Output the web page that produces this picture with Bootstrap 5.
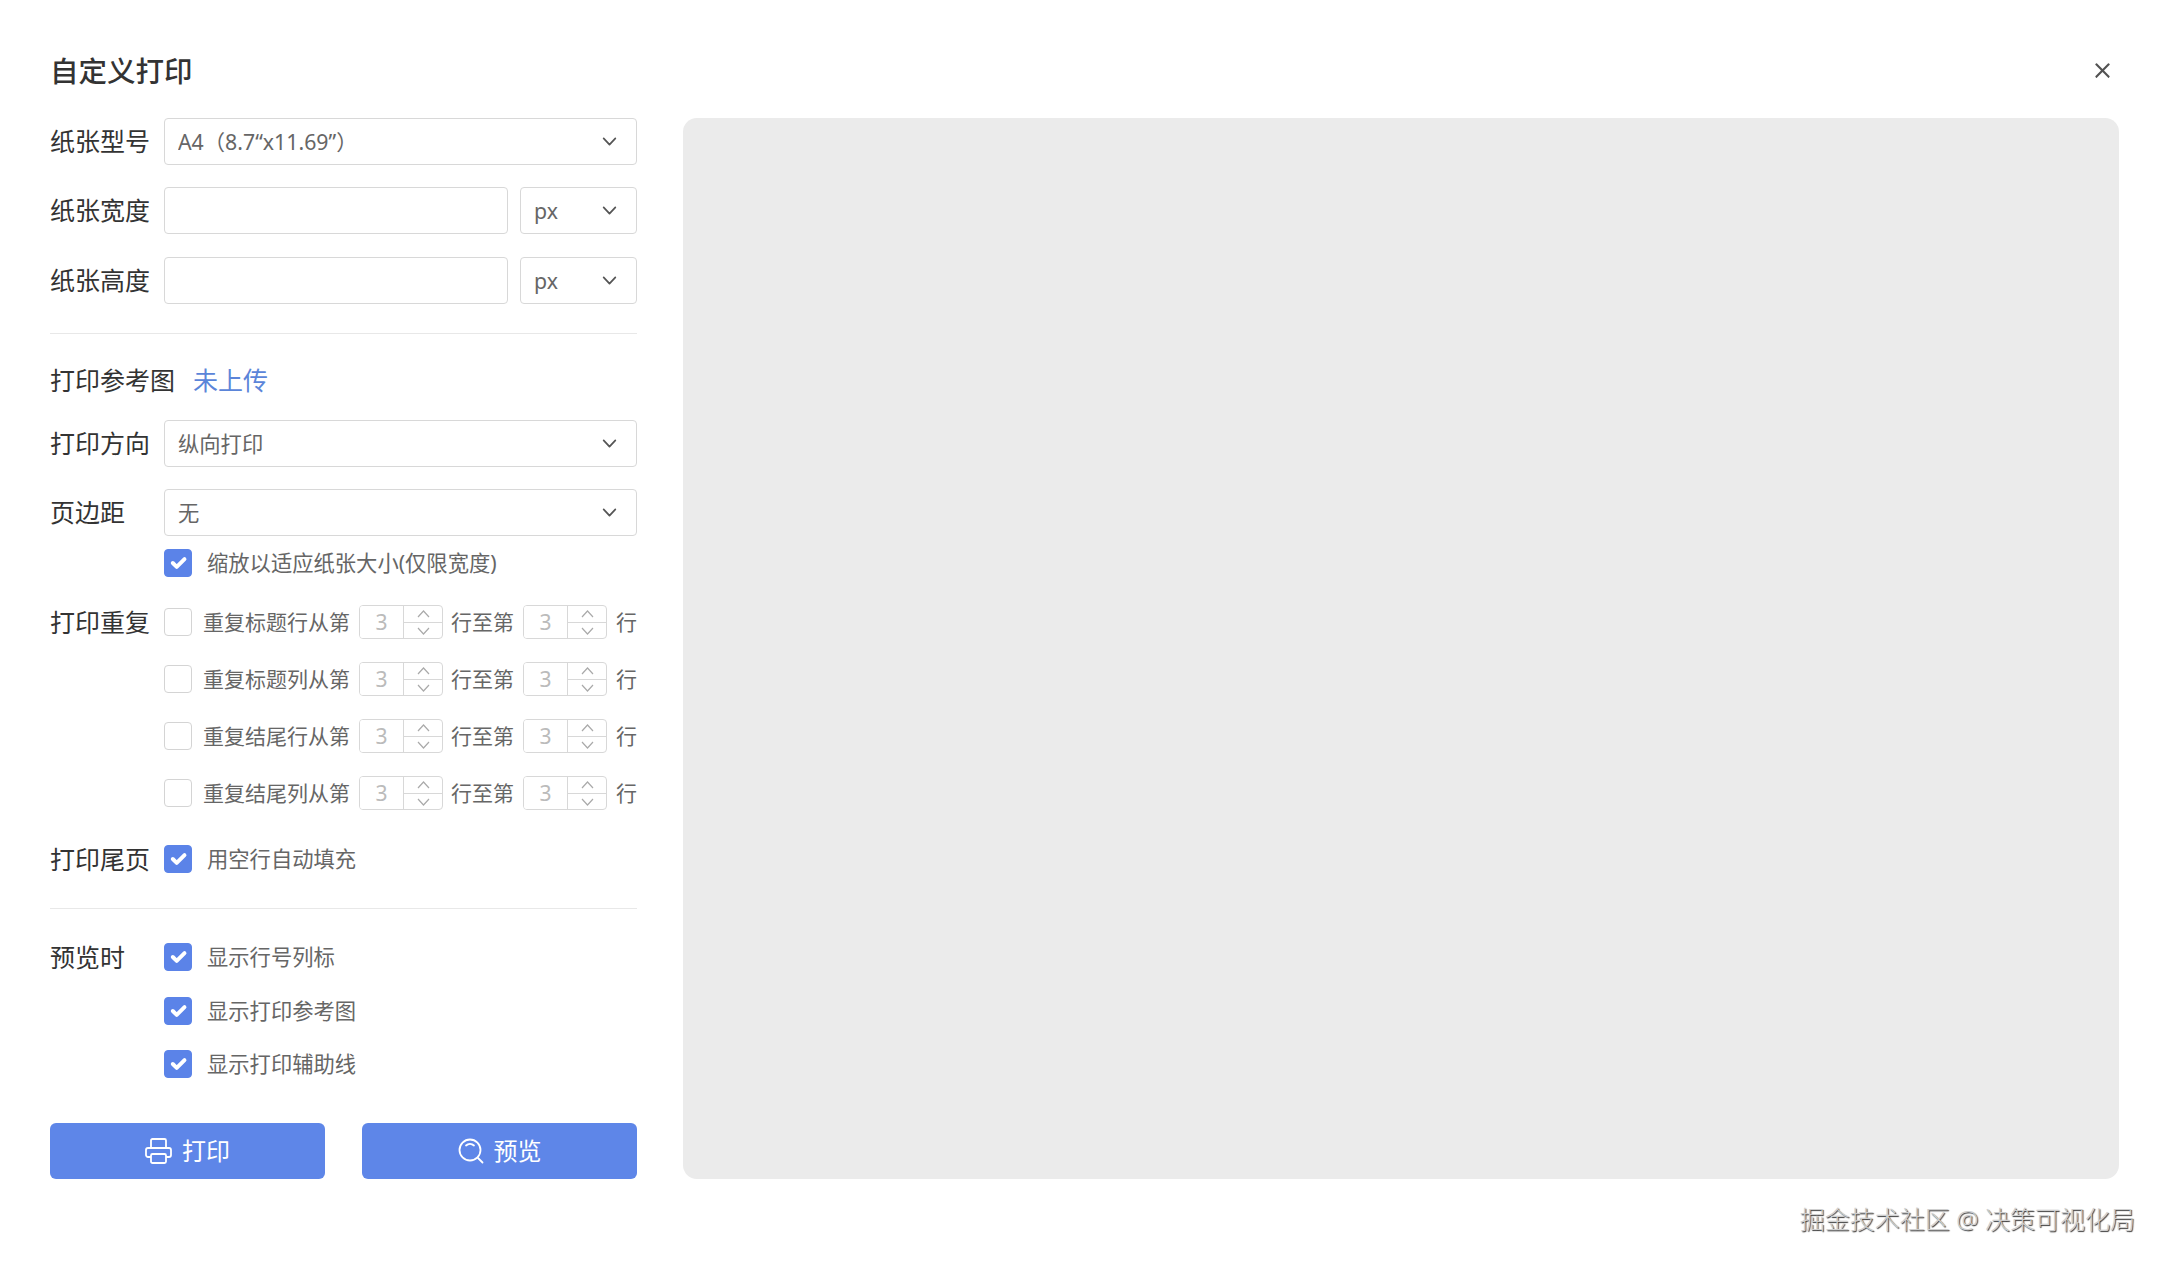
<!DOCTYPE html>
<html lang="zh-CN">
<head>
<meta charset="utf-8">
<title>自定义打印</title>
<link rel="stylesheet" href="https://cdn.jsdelivr.net/npm/bootstrap@5.3.0/dist/css/bootstrap.min.css">
<style>
html,body{height:100%}
body{background:#fff;overflow:hidden;font-family:"Noto Sans","Noto Sans CJK SC",sans-serif;color:#333}
.pg-head{height:118px;padding:0 56px 33px 50px}
.pg-title{font-size:28.500px;font-weight:500;line-height:1;margin:0;color:#333}
.btn-close.x-btn{width:17px;height:17px;padding:0;background-size:17px;opacity:.68;box-sizing:border-box;margin-bottom:6px}
.pg-main{padding:0 48px 0 50px;gap:46px}
.side{width:587px;flex:none}
.panel{flex:1;height:1061px;background:#ebebeb;border-radius:14px}
.line-47{height:47px}
.line-28{height:28px}
.line-34{height:34px}
.lbl{width:114px;flex:none;font-size:25px;line-height:1;color:#333;white-space:nowrap}
.form-select.f-sel,.form-control.f-in{height:47px;font-size:21.300px;color:#666;border:1.5px solid #d8d8d8;border-radius:4px;padding:0 40px 0 13px;box-shadow:none;font-family:inherit;background-color:#fff}
.form-select.f-sel{background-image:url("data:image/svg+xml,%3csvg xmlns='http://www.w3.org/2000/svg' viewBox='0 0 16 16'%3e%3cpath fill='none' stroke='%23555' stroke-linecap='round' stroke-linejoin='round' stroke-width='1.6' d='M2.5 5l5.5 6 5.5-6'/%3e%3c/svg%3e");background-position:right 18px center;background-size:17px 17px}
.w-in{width:344px;flex:none}
.w-un{width:117px;flex:none;margin-left:12px}
.form-check-input.f-chk{width:28px;height:28px;margin:0;flex:none;border:1.5px solid #d4d4d4;border-radius:4px;box-shadow:none;float:none}
.form-check-input.f-chk:checked{background-color:#5b83e8;border-color:#5b83e8}
.chk-txt{font-size:21.300px;line-height:1;color:#666;margin-left:15px}
.chk-txt.tight{margin-left:11px;width:147px;flex:none;white-space:nowrap;font-size:21px}
.ref-txt{font-size:25px;line-height:1;color:#333}
.ref-link{font-size:25px;line-height:1;color:#5b85d9;text-decoration:none;margin-left:18px}
.rep-lead{width:114px;flex:none}
.rep-cell{width:84px;height:34px;border:1.5px solid #d8d8d8;border-radius:4px;flex:none;overflow:hidden;margin-left:9px}
.rep-cell input{width:44px;height:100%;border:0;border-right:1.5px solid #d8d8d8;padding:0;text-align:center;color:#bbb;font-size:21px;background:#fff;font-family:inherit;outline:0}
.rep-arrows{flex:1}
.rep-arrows span{height:50%;display:flex;align-items:center;justify-content:center}
.rep-arrows span+span{border-top:1.5px solid #d8d8d8}
.rep-mid{font-size:21px;line-height:1;color:#666;margin-left:8px;width:63px;flex:none;white-space:nowrap}
.rep-end{font-size:21px;line-height:1;color:#666;margin-left:9px;white-space:nowrap}
.rule{margin:0;border:0;border-top:1px solid #e8e8e8;opacity:1}
.btn.go-btn{width:275px;height:56px;background:#5e86e8;border:0;border-radius:6px;color:#fff;font-size:24px;line-height:1;padding:0;gap:10px}
.mt13{margin-top:13px}.mt20{margin-top:20px}.mt22{margin-top:22px}.mt23{margin-top:23px}.mt25{margin-top:25px}.mt26{margin-top:26px}.mt28{margin-top:28px}.mt29{margin-top:29px}.mt34{margin-top:34px}.mt35{margin-top:35px}.mt45{margin-top:45px}
.mark-txt{padding:25px 32px 0 0;font-size:25px;font-weight:300;line-height:30px;color:#cfcfcf;text-shadow:1px 1px 1px #333,-1px -1px 0 #fff;white-space:nowrap}
</style>
</head>
<body>
<header class="pg-head d-flex justify-content-between align-items-end">
  <h1 class="pg-title">自定义打印</h1>
  <button type="button" class="btn-close x-btn" aria-label="关闭"></button>
</header>
<main class="pg-main d-flex align-items-start">
  <form class="side">
    <div class="d-flex align-items-center line-47"><span class="lbl">纸张型号</span>
      <select class="form-select f-sel"><option>A4（8.7“x11.69”）</option></select></div>
    <div class="d-flex align-items-center line-47 mt22"><span class="lbl">纸张宽度</span>
      <input class="form-control f-in w-in" type="text">
      <select class="form-select f-sel w-un"><option>px</option></select></div>
    <div class="d-flex align-items-center line-47 mt23"><span class="lbl">纸张高度</span>
      <input class="form-control f-in w-in" type="text">
      <select class="form-select f-sel w-un"><option>px</option></select></div>
    <hr class="rule mt29">
    <div class="d-flex align-items-center mt26" style="height:40px"><span class="ref-txt">打印参考图</span><a class="ref-link" href="#">未上传</a></div>
    <div class="d-flex align-items-center line-47 mt20"><span class="lbl">打印方向</span>
      <select class="form-select f-sel"><option>纵向打印</option></select></div>
    <div class="d-flex align-items-center line-47 mt22"><span class="lbl">页边距</span>
      <select class="form-select f-sel"><option>无</option></select></div>
    <div class="d-flex align-items-center line-28 mt13"><span class="rep-lead"></span>
      <input class="form-check-input f-chk" type="checkbox" checked><span class="chk-txt">缩放以适应纸张大小(仅限宽度)</span></div>

    <div class="d-flex align-items-center line-34 mt28"><span class="lbl">打印重复</span>
      <input class="form-check-input f-chk" type="checkbox"><span class="chk-txt tight">重复标题行从第</span>
      <div class="rep-cell d-flex"><input value="3" aria-label="起始"><div class="rep-arrows"><span><svg width="13" height="8" viewBox="0 0 13 8"><path d="M1 7l5.5-6L12 7" fill="none" stroke="#aaa" stroke-width="1.2"/></svg></span><span><svg width="13" height="8" viewBox="0 0 13 8"><path d="M1 1l5.5 6L12 1" fill="none" stroke="#aaa" stroke-width="1.2"/></svg></span></div></div>
      <span class="rep-mid">行至第</span>
      <div class="rep-cell d-flex"><input value="3" aria-label="结束"><div class="rep-arrows"><span><svg width="13" height="8" viewBox="0 0 13 8"><path d="M1 7l5.5-6L12 7" fill="none" stroke="#aaa" stroke-width="1.2"/></svg></span><span><svg width="13" height="8" viewBox="0 0 13 8"><path d="M1 1l5.5 6L12 1" fill="none" stroke="#aaa" stroke-width="1.2"/></svg></span></div></div>
      <span class="rep-end">行</span></div>
    <div class="d-flex align-items-center line-34 mt23"><span class="rep-lead"></span>
      <input class="form-check-input f-chk" type="checkbox"><span class="chk-txt tight">重复标题列从第</span>
      <div class="rep-cell d-flex"><input value="3" aria-label="起始"><div class="rep-arrows"><span><svg width="13" height="8" viewBox="0 0 13 8"><path d="M1 7l5.5-6L12 7" fill="none" stroke="#aaa" stroke-width="1.2"/></svg></span><span><svg width="13" height="8" viewBox="0 0 13 8"><path d="M1 1l5.5 6L12 1" fill="none" stroke="#aaa" stroke-width="1.2"/></svg></span></div></div>
      <span class="rep-mid">行至第</span>
      <div class="rep-cell d-flex"><input value="3" aria-label="结束"><div class="rep-arrows"><span><svg width="13" height="8" viewBox="0 0 13 8"><path d="M1 7l5.5-6L12 7" fill="none" stroke="#aaa" stroke-width="1.2"/></svg></span><span><svg width="13" height="8" viewBox="0 0 13 8"><path d="M1 1l5.5 6L12 1" fill="none" stroke="#aaa" stroke-width="1.2"/></svg></span></div></div>
      <span class="rep-end">行</span></div>
    <div class="d-flex align-items-center line-34 mt23"><span class="rep-lead"></span>
      <input class="form-check-input f-chk" type="checkbox"><span class="chk-txt tight">重复结尾行从第</span>
      <div class="rep-cell d-flex"><input value="3" aria-label="起始"><div class="rep-arrows"><span><svg width="13" height="8" viewBox="0 0 13 8"><path d="M1 7l5.5-6L12 7" fill="none" stroke="#aaa" stroke-width="1.2"/></svg></span><span><svg width="13" height="8" viewBox="0 0 13 8"><path d="M1 1l5.5 6L12 1" fill="none" stroke="#aaa" stroke-width="1.2"/></svg></span></div></div>
      <span class="rep-mid">行至第</span>
      <div class="rep-cell d-flex"><input value="3" aria-label="结束"><div class="rep-arrows"><span><svg width="13" height="8" viewBox="0 0 13 8"><path d="M1 7l5.5-6L12 7" fill="none" stroke="#aaa" stroke-width="1.2"/></svg></span><span><svg width="13" height="8" viewBox="0 0 13 8"><path d="M1 1l5.5 6L12 1" fill="none" stroke="#aaa" stroke-width="1.2"/></svg></span></div></div>
      <span class="rep-end">行</span></div>
    <div class="d-flex align-items-center line-34 mt23"><span class="rep-lead"></span>
      <input class="form-check-input f-chk" type="checkbox"><span class="chk-txt tight">重复结尾列从第</span>
      <div class="rep-cell d-flex"><input value="3" aria-label="起始"><div class="rep-arrows"><span><svg width="13" height="8" viewBox="0 0 13 8"><path d="M1 7l5.5-6L12 7" fill="none" stroke="#aaa" stroke-width="1.2"/></svg></span><span><svg width="13" height="8" viewBox="0 0 13 8"><path d="M1 1l5.5 6L12 1" fill="none" stroke="#aaa" stroke-width="1.2"/></svg></span></div></div>
      <span class="rep-mid">行至第</span>
      <div class="rep-cell d-flex"><input value="3" aria-label="结束"><div class="rep-arrows"><span><svg width="13" height="8" viewBox="0 0 13 8"><path d="M1 7l5.5-6L12 7" fill="none" stroke="#aaa" stroke-width="1.2"/></svg></span><span><svg width="13" height="8" viewBox="0 0 13 8"><path d="M1 1l5.5 6L12 1" fill="none" stroke="#aaa" stroke-width="1.2"/></svg></span></div></div>
      <span class="rep-end">行</span></div>

    <div class="d-flex align-items-center line-28 mt35"><span class="lbl">打印尾页</span>
      <input class="form-check-input f-chk" type="checkbox" checked><span class="chk-txt">用空行自动填充</span></div>
    <hr class="rule mt35">
    <div class="d-flex align-items-center line-28 mt34"><span class="lbl">预览时</span>
      <input class="form-check-input f-chk" type="checkbox" checked><span class="chk-txt">显示行号列标</span></div>
    <div class="d-flex align-items-center line-28 mt26"><span class="rep-lead"></span>
      <input class="form-check-input f-chk" type="checkbox" checked><span class="chk-txt">显示打印参考图</span></div>
    <div class="d-flex align-items-center line-28 mt25"><span class="rep-lead"></span>
      <input class="form-check-input f-chk" type="checkbox" checked><span class="chk-txt">显示打印辅助线</span></div>
    <div class="d-flex justify-content-between mt45">
      <button type="button" class="btn go-btn d-flex align-items-center justify-content-center">
        <svg width="27" height="26" viewBox="0 0 27 26" fill="none" stroke="#fff" stroke-width="1.8" stroke-linejoin="round"><path d="M6 10V2.5a1.5 1.5 0 0 1 1.500-1.500h12A1.500 1.500 0 0 1 21 2.500V10"/><path d="M6 19H3a2 2 0 0 1-2-2v-5a2 2 0 0 1 2-2h21a2 2 0 0 1 2 2v5a2 2 0 0 1-2 2h-3"/><rect x="6" y="16" width="15" height="9" rx="1.500"/></svg>
        <span>打印</span></button>
      <button type="button" class="btn go-btn d-flex align-items-center justify-content-center">
        <svg width="26" height="26" viewBox="0 0 26 26" fill="none" stroke="#fff" stroke-width="1.800" stroke-linecap="round"><circle cx="12" cy="12" r="10.500"/><path d="M20 20l4.500 4.500"/><path d="M8 7.500a6 6 0 0 1 8 0"/></svg>
        <span>预览</span></button>
    </div>
  </form>
  <section class="panel" aria-label="预览区域"></section>
</main>
<footer class="mark-txt d-flex justify-content-end">掘金技术社区 @ 决策可视化局</footer>
<script src="https://cdn.jsdelivr.net/npm/bootstrap@5.3.0/dist/js/bootstrap.bundle.min.js"></script>
</body>
</html>
